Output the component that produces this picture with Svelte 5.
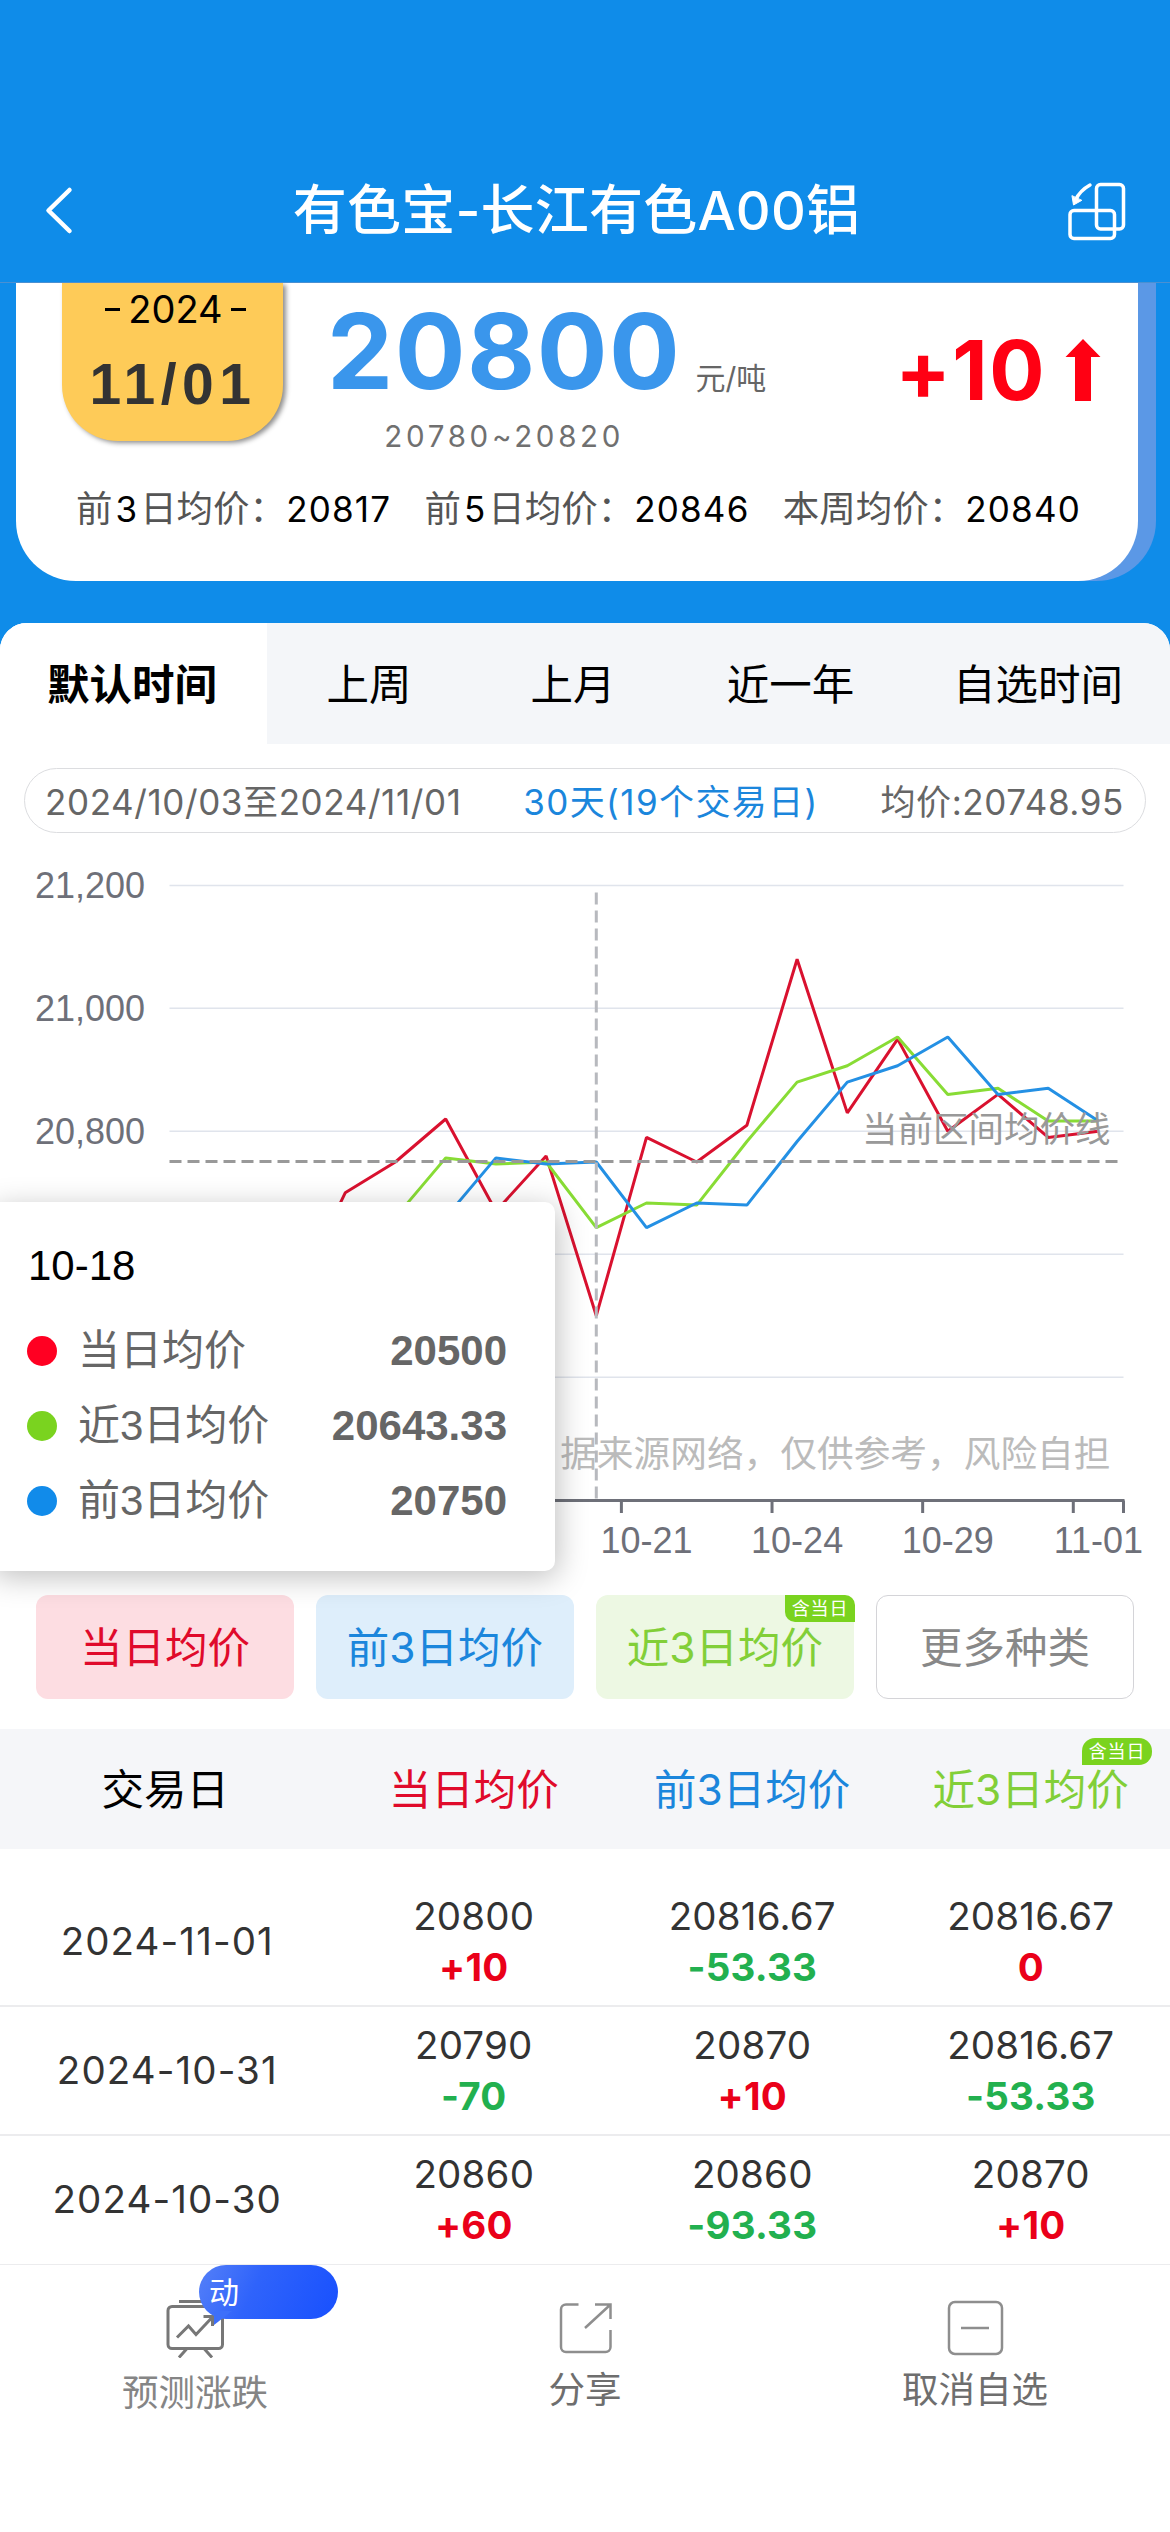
<script lang="ts">
  type Row = { date: string; cells: { value: string; delta: string }[] };

  const tabs = ['默认时间', '上周', '上月', '近一年', '自选时间'];
  let activeTab = $state(0);

  const averages = [
    { label: ['前', '3', '日均价：'], value: '20817' },
    { label: ['前', '5', '日均价：'], value: '20846' },
    { label: ['本周均价：', '', ''], value: '20840' },
  ];

  const chips = [
    { text: '当日均价', kind: 'red' },
    { text: '前3日均价', kind: 'blue' },
    { text: '近3日均价', kind: 'green', badge: '含当日' },
    { text: '更多种类', kind: 'plain' },
  ];

  const tooltip = [
    { name: '当日均价', value: '20500', kind: 'red' },
    { name: '近3日均价', value: '20643.33', kind: 'green' },
    { name: '前3日均价', value: '20750', kind: 'blue' },
  ];

  const rows: Row[] = [
    {
      date: '2024-11-01',
      cells: [
        { value: '20800', delta: '+10' },
        { value: '20816.67', delta: '-53.33' },
        { value: '20816.67', delta: '0' },
      ],
    },
    {
      date: '2024-10-31',
      cells: [
        { value: '20790', delta: '-70' },
        { value: '20870', delta: '+10' },
        { value: '20816.67', delta: '-53.33' },
      ],
    },
    {
      date: '2024-10-30',
      cells: [
        { value: '20860', delta: '+60' },
        { value: '20860', delta: '-93.33' },
        { value: '20870', delta: '+10' },
      ],
    },
  ];

  // chart geometry
  const left = 169.5;
  const right = 1123.5;
  const axisY = 667.5;
  const selected = 8;

  const daily = [
    20480, 20500, 20530, 20700, 20750, 20820, 20670, 20760, 20500, 20790,
    20750, 20810, 21080, 20830, 20950, 20800, 20860, 20790, 20800,
  ];
  const step = (right - left) / daily.length;

  const x = (i: number) => left + step * (i + 0.5);
  const y = (v: number) => 298.3 + (20800 - v) * 0.6148;

  // 3-day mean including the day itself
  const recent = daily.map((v, i) =>
    i < 2 ? null : (v + daily[i - 1] + daily[i - 2]) / 3
  );
  // 3-day mean of the preceding days
  const previous = [null, ...recent.slice(0, -1)];

  function line(values: (number | null)[]) {
    return values
      .map((v, i) => (v === null ? '' : `${x(i).toFixed(1)},${y(v).toFixed(1)}`))
      .filter(Boolean)
      .join(' ');
  }

  // the lowest labels would lie under the tooltip
  const gridLines = [
    { v: 21200, text: '21,200' },
    { v: 21000, text: '21,000' },
    { v: 20800, text: '20,800' },
    { v: 20600 },
    { v: 20400 },
  ];
  const xLabels = [
    { i: 9, text: '10-21' },
    { i: 12, text: '10-24' },
    { i: 15, text: '10-29' },
    { i: 18, text: '11-01' },
  ];
</script>

<div class="page">
  <header class="nav">
    <svg class="back" width="40" height="50" viewBox="0 0 40 50" aria-hidden="true">
      <path d="M30.500 4 9.500 24.500l21 20.500" />
    </svg>
    <h1>有色宝-长江有色A00铝</h1>
    <svg class="rotate" width="62" height="62" viewBox="0 0 62 62" aria-hidden="true">
      <rect x="29.500" y="4.500" width="27" height="44.500" rx="4" />
      <rect x="3" y="30.500" width="44.500" height="28" rx="4" />
      <path d="M23 5Q13 10.500 8.500 20" />
      <path class="head" d="M5 16 6.500 25 14.500 20.500z" />
    </svg>
  </header>

  <section class="hero">
    <div class="card">
      <div class="quote">
        <div class="date">
          <span class="year"><i></i>2024<i></i></span>
          <b>11/01</b>
        </div>
        <div class="price">
          <strong>20800</strong>
          <span class="unit">元/吨</span>
          <span class="range">20780~20820</span>
        </div>
        <div class="change">
          <span>+10</span>
          <svg width="36" height="62" viewBox="0 0 36 62" aria-hidden="true">
            <path d="M18 0 35.500 18H26v44H10V18H.5z" />
          </svg>
        </div>
      </div>
      <div class="averages">
        {#each averages as item}
          <div>
            {item.label[0]}{#if item.label[1]}<em>{item.label[1]}</em>{/if}{item.label[2]}<span>{item.value}</span>
          </div>
        {/each}
      </div>
    </div>
  </section>

  <main class="sheet">
    <nav class="tabs">
      {#each tabs as tab, i}
        <button class:active={activeTab === i} onclick={() => (activeTab = i)}>{tab}</button>
      {/each}
    </nav>

    <div class="summary">
      <span class="period">2024/10/03至2024/11/01</span>
      <span class="days">30天(19个交易日)</span>
      <span class="mean">均价:20748.95</span>
    </div>

    <div class="chart">
      <svg width="1170" height="762" viewBox="0 0 1170 762">
        {#each gridLines as g}
          <line class="grid" x1={left} x2={right} y1={y(g.v)} y2={y(g.v)} />
          {#if g.text}
            <text class="axis-label" x="145" y={y(g.v) + 12.5} text-anchor="end">{g.text}</text>
          {/if}
        {/each}

        <text class="watermark" x="1110.500" y="634" text-anchor="end">据来源网络，仅供参考，风险自担</text>

        <polyline class="series red" points={line(daily)} />
        <polyline class="series green" points={line(recent)} />
        <polyline class="series blue" points={line(previous)} />

        <line class="mean-line" x1={left} x2="1118" y1="328.500" y2="328.500" />
        <text class="mean-label" x="1110.500" y="309" text-anchor="end">当前区间均价线</text>
        <line class="cursor" x1={x(selected)} x2={x(selected)} y1="59.500" y2={axisY} />

        <line class="axis" x1={left} x2={right + 1} y1={axisY} y2={axisY} />
        {#each xLabels as label}
          <line class="tick" x1={x(label.i) - step / 2} x2={x(label.i) - step / 2} y1={axisY} y2="680" />
          <text class="axis-label" x={x(label.i)} y="720" text-anchor="middle">{label.text}</text>
        {/each}
        <line class="tick" x1={right} x2={right} y1={axisY} y2="680" />
      </svg>

      <div class="tooltip">
        <h2>10-18</h2>
        {#each tooltip as item}
          <div class="tip-row">
            <i class={item.kind}></i>
            <span>{item.name}</span>
            <b>{item.value}</b>
          </div>
        {/each}
      </div>
    </div>

    <div class="chips">
      {#each chips as chip}
        <button class="chip {chip.kind}">
          {chip.text}
          {#if chip.badge}<small>{chip.badge}</small>{/if}
        </button>
      {/each}
    </div>

    <div class="row thead">
      <div class="first">交易日</div>
      <div class="red">当日均价</div>
      <div class="blue">前3日均价</div>
      <div class="green">近3日均价<small>含当日</small></div>
    </div>
    <div class="tbody">
      {#each rows as row}
        <div class="row">
          <div class="day">{row.date}</div>
          {#each row.cells as cell}
            <div class="cell">
              <span>{cell.value}</span>
              <b class:down={cell.delta.startsWith('-')}>{cell.delta}</b>
            </div>
          {/each}
        </div>
      {/each}
    </div>
  </main>

  <footer class="bar">
    <div class="action muted">
      <svg width="62" height="62" viewBox="0 0 62 62" aria-hidden="true">
        <path d="M15 5.500h32M4 14.500a4 4 0 0 1 4-4h46.500a4 4 0 0 1 4 4v34a4 4 0 0 1-4 4H8a4 4 0 0 1-4-4zM23 52.500l-8 9M40 52.500l8 9" />
        <path d="M13 41.500 24.500 30l7.500 8.500L48.500 21M39.500 20.500h9V30" />
      </svg>
      <span>预测涨跌</span>
      <div class="bubble">动</div>
    </div>
    <div class="action">
      <svg class="thin" width="62" height="62" viewBox="0 0 62 62" aria-hidden="true">
        <path d="M24.500 8.500H12a5 5 0 0 0-5 5V51a5 5 0 0 0 5 5h39.500a5 5 0 0 0 5-5V34M31 32 56 9M41 8.500h15.500V23" />
      </svg>
      <span>分享</span>
    </div>
    <div class="action">
      <svg class="thin" width="62" height="62" viewBox="0 0 62 62" aria-hidden="true">
        <rect x="5" y="6" width="53" height="52" rx="6" />
        <path d="M17 32h28" />
      </svg>
      <span>取消自选</span>
    </div>
  </footer>
</div>

<style>
  :global(body) {
    margin: 0;
  }

  .page {
    --blue: #0f8ce9;
    --sans: Inter, 'Noto Sans CJK SC', sans-serif;
    --helv: 'Liberation Sans', 'Noto Sans CJK SC', sans-serif;
    display: flex;
    flex-direction: column;
    width: 1170px;
    height: 2532px;
    overflow: hidden;
    background: var(--blue);
    font-family: var(--sans);
    color: #000;
  }

  button {
    padding: 0;
    border: 0;
    background: none;
    font: inherit;
    color: inherit;
  }

  h1,
  h2 {
    margin: 0;
  }

  .nav {
    box-sizing: border-box;
    display: flex;
    align-items: center;
    justify-content: space-between;
    height: 283px;
    padding: 140px 41px 0 39px;
    border-bottom: 1px solid #4a90d2;
    color: #fff;
  }

  .nav h1 {
    font-size: 54px;
    font-weight: 500;
    line-height: 80px;
    letter-spacing: 0.200px;
  }

  .nav svg {
    fill: none;
    stroke: #fff;
    stroke-width: 3.500;
    stroke-linecap: round;
    stroke-linejoin: round;
  }

  .nav .back {
    width: 40px;
    margin-right: 7px;
    stroke-width: 4.500;
  }

  .nav .head {
    fill: #fff;
    stroke-width: 1;
  }

  .hero {
    height: 340px;
  }

  .card {
    width: 1122px;
    height: 298px;
    margin-left: 16px;
    border-radius: 0 0 60px 60px;
    background: #fff;
    box-shadow: 18px 0 0 #5b98e6;
  }

  .quote {
    display: flex;
    height: 190px;
    padding: 0 37px 0 46px;
  }

  .date {
    display: flex;
    flex-direction: column;
    align-items: center;
    width: 221px;
    height: 158px;
    border-radius: 0 0 56px 56px;
    background: #fecb58;
    box-shadow: 3px 2px 5px rgba(0, 0, 0, 0.45);
    clip-path: inset(0 -12px -12px -12px);
  }

  .year {
    display: flex;
    align-items: center;
    gap: 8px;
    padding-left: 6px;
    font-size: 38px;
    line-height: 53px;
  }

  .year i {
    width: 15px;
    height: 3px;
    background: #000;
  }

  .date b {
    margin-top: 18px;
    padding-left: 1px;
    font-family: var(--helv);
    font-size: 57px;
    line-height: 60px;
    letter-spacing: 5.500px;
    color: #333;
  }

  .price {
    display: grid;
    grid-template-columns: auto auto;
    grid-template-rows: 134px 40px;
    align-items: baseline;
    column-gap: 14px;
    margin-left: 44px;
  }

  .price strong {
    font-size: 105px;
    line-height: 136px;
    letter-spacing: 1.500px;
    color: #3a96ec;
  }

  .unit {
    font-size: 30px;
    color: #666;
  }

  .range {
    justify-self: center;
    font-size: 29.500px;
    line-height: 38px;
    letter-spacing: 3.700px;
    color: #707070;
  }

  .change {
    display: flex;
    align-items: center;
    gap: 19px;
    height: 174px;
    margin-left: auto;
    font-size: 82px;
    font-weight: 700;
    letter-spacing: 1.500px;
    color: #ff0013;
  }

  .change path {
    fill: #ff0013;
  }

  .averages {
    display: flex;
    justify-content: space-between;
    padding: 0 57px 0 60px;
    font-size: 36.500px;
    line-height: 72px;
    color: #555;
  }

  .averages em {
    margin: 0 3px;
    font-style: normal;
    font-size: 35px;
    color: #000;
  }

  .averages span {
    font-size: 35px;
    letter-spacing: 1.200px;
    color: #000;
  }

  .sheet {
    height: 1642px;
    border-radius: 27px 27px 0 0;
    background: #fff;
    overflow: hidden;
  }

  .tabs {
    display: grid;
    grid-template-columns: 267px 204px 204px 231px 264px;
    height: 121px;
    background: #f4f6f9;
    font-size: 42.500px;
  }

  .tabs button {
    padding: 0 0 4px;
  }

  .tabs button.active {
    padding-right: 3px;
    background: #fff;
    font-weight: 700;
  }

  .summary {
    box-sizing: border-box;
    display: flex;
    align-items: center;
    justify-content: space-between;
    height: 65px;
    margin: 24px 24px 0;
    padding: 0 21px 2px 20px;
    border: 1px solid #dcdde0;
    border-radius: 33px;
    font-size: 35px;
    letter-spacing: 0.600px;
    color: #666;
  }

  .days {
    letter-spacing: 1.400px;
    color: #1b86dc;
  }

  .chart {
    position: relative;
    height: 762px;
  }

  .chart > svg {
    display: block;
  }

  .grid {
    stroke: #e0e4ec;
    stroke-width: 1.500;
  }

  .axis-label {
    font-family: var(--helv);
    font-size: 36px;
    fill: #6e7079;
  }

  .axis,
  .tick {
    stroke: #6e7079;
    stroke-width: 3;
  }

  .series {
    fill: none;
    stroke-width: 3;
    stroke-linejoin: bevel;
  }

  .series.red {
    stroke: #d9112f;
  }

  .series.green {
    stroke: #88dc35;
  }

  .series.blue {
    stroke: #2490e4;
  }

  .mean-line {
    stroke: #999;
    stroke-width: 3;
    stroke-dasharray: 12 6;
  }

  .mean-label {
    font-size: 35.500px;
    fill: #999;
  }

  .watermark {
    font-size: 36.700px;
    fill: #bbb;
  }

  .cursor {
    stroke: #b7b9be;
    stroke-width: 3;
    stroke-dasharray: 12 6;
  }

  .tooltip {
    box-sizing: border-box;
    position: absolute;
    z-index: 1;
    top: 369px;
    left: -10px;
    width: 565px;
    height: 369px;
    padding: 34px 48px 0 37px;
    border-radius: 10px;
    background: #fff;
    box-shadow: 3px 6px 30px rgba(0, 0, 0, 0.25);
    font-family: var(--helv);
    font-size: 42px;
  }

  .tooltip h2 {
    padding-left: 1px;
    font-size: 42px;
    font-weight: 400;
    line-height: 60px;
    margin-bottom: 17px;
  }

  .tip-row {
    display: flex;
    align-items: center;
    height: 75px;
    line-height: 56px;
    color: #666;
  }

  .tip-row i {
    width: 30px;
    height: 30px;
    margin-right: 21px;
    border-radius: 50%;
  }

  .tip-row i.red {
    background: #ff0022;
  }

  .tip-row i.green {
    background: #7ad31f;
  }

  .tip-row i.blue {
    background: #118bea;
  }

  .tip-row b {
    margin-left: auto;
  }

  .chips {
    display: grid;
    grid-template-columns: repeat(4, 258px);
    justify-content: space-between;
    height: 104px;
    margin-bottom: 30px;
    padding: 0 36px;
    font-size: 42.500px;
  }

  .chip {
    position: relative;
    padding-bottom: 5px;
    border-radius: 12px;
  }

  .red {
    color: #e00a2b;
  }

  .blue {
    color: #1b86dc;
  }

  .green {
    color: #82cf38;
  }

  .chip.red {
    background: #fddde2;
  }

  .chip.blue {
    background: #deeefb;
  }

  .chip.green {
    background: #edf8e3;
  }

  .chip.plain {
    border: 1px solid #d4d4d8;
    color: #888;
  }

  small {
    position: absolute;
    top: 0;
    right: -1px;
    width: 70px;
    border-radius: 0 10px 0 10px;
    background: #7ad31f;
    font-size: 18px;
    line-height: 27px;
    letter-spacing: 0.800px;
    text-align: center;
    color: #fff;
  }

  .row {
    box-sizing: border-box;
    display: grid;
    grid-template-columns: 334.500px repeat(3, 278.500px);
    align-items: center;
    height: 129.200px;
    border-bottom: 2px solid #ececee;
    font-size: 38.500px;
    text-align: center;
    color: #333;
  }

  .thead {
    position: relative;
    height: 120px;
    padding-bottom: 5px;
    border: 0;
    background: #f5f6f9;
    font-size: 42.500px;
    color: #000;
  }

  .thead .first {
    padding-right: 4px;
  }

  .thead small {
    top: 9px;
    right: 18px;
    border-radius: 13px 13px 13px 0;
  }

  .tbody {
    padding-top: 29px;
  }

  .day {
    padding-bottom: 2px;
    letter-spacing: 1.100px;
  }

  .cell {
    display: flex;
    flex-direction: column;
    line-height: 51px;
    letter-spacing: 0.200px;
  }

  .cell b {
    color: #ea0019;
  }

  .cell b.down {
    color: #22b04f;
  }

  .bar {
    display: grid;
    grid-template-columns: repeat(3, 1fr);
    flex: 1;
    background: #fff;
  }

  .action {
    position: relative;
    display: flex;
    flex-direction: column;
    align-items: center;
    padding-top: 31px;
    font-size: 36.500px;
    color: #6e6e6e;
  }

  .action.muted {
    color: #858585;
  }

  .action svg {
    fill: none;
    stroke: #777;
    stroke-width: 3;
  }

  .action svg.thin {
    stroke: #8e8e8e;
    stroke-width: 2.500;
  }

  .action span {
    margin-top: 7px;
    line-height: 50px;
  }

  .action.muted span {
    margin-top: 10px;
  }

  .bubble {
    box-sizing: border-box;
    position: absolute;
    top: 0;
    left: 199px;
    width: 139px;
    height: 54px;
    padding-left: 10px;
    border-radius: 27px;
    background: linear-gradient(115deg, #5580f8, #2f63fb 40%, #1850fe);
    font-size: 30px;
    line-height: 54px;
    color: #fff;
  }

  .bubble::after {
    content: '';
    position: absolute;
    left: 15px;
    bottom: -6px;
    border-top: 14px solid #3d6ffa;
    border-right: 18px solid transparent;
  }
</style>
